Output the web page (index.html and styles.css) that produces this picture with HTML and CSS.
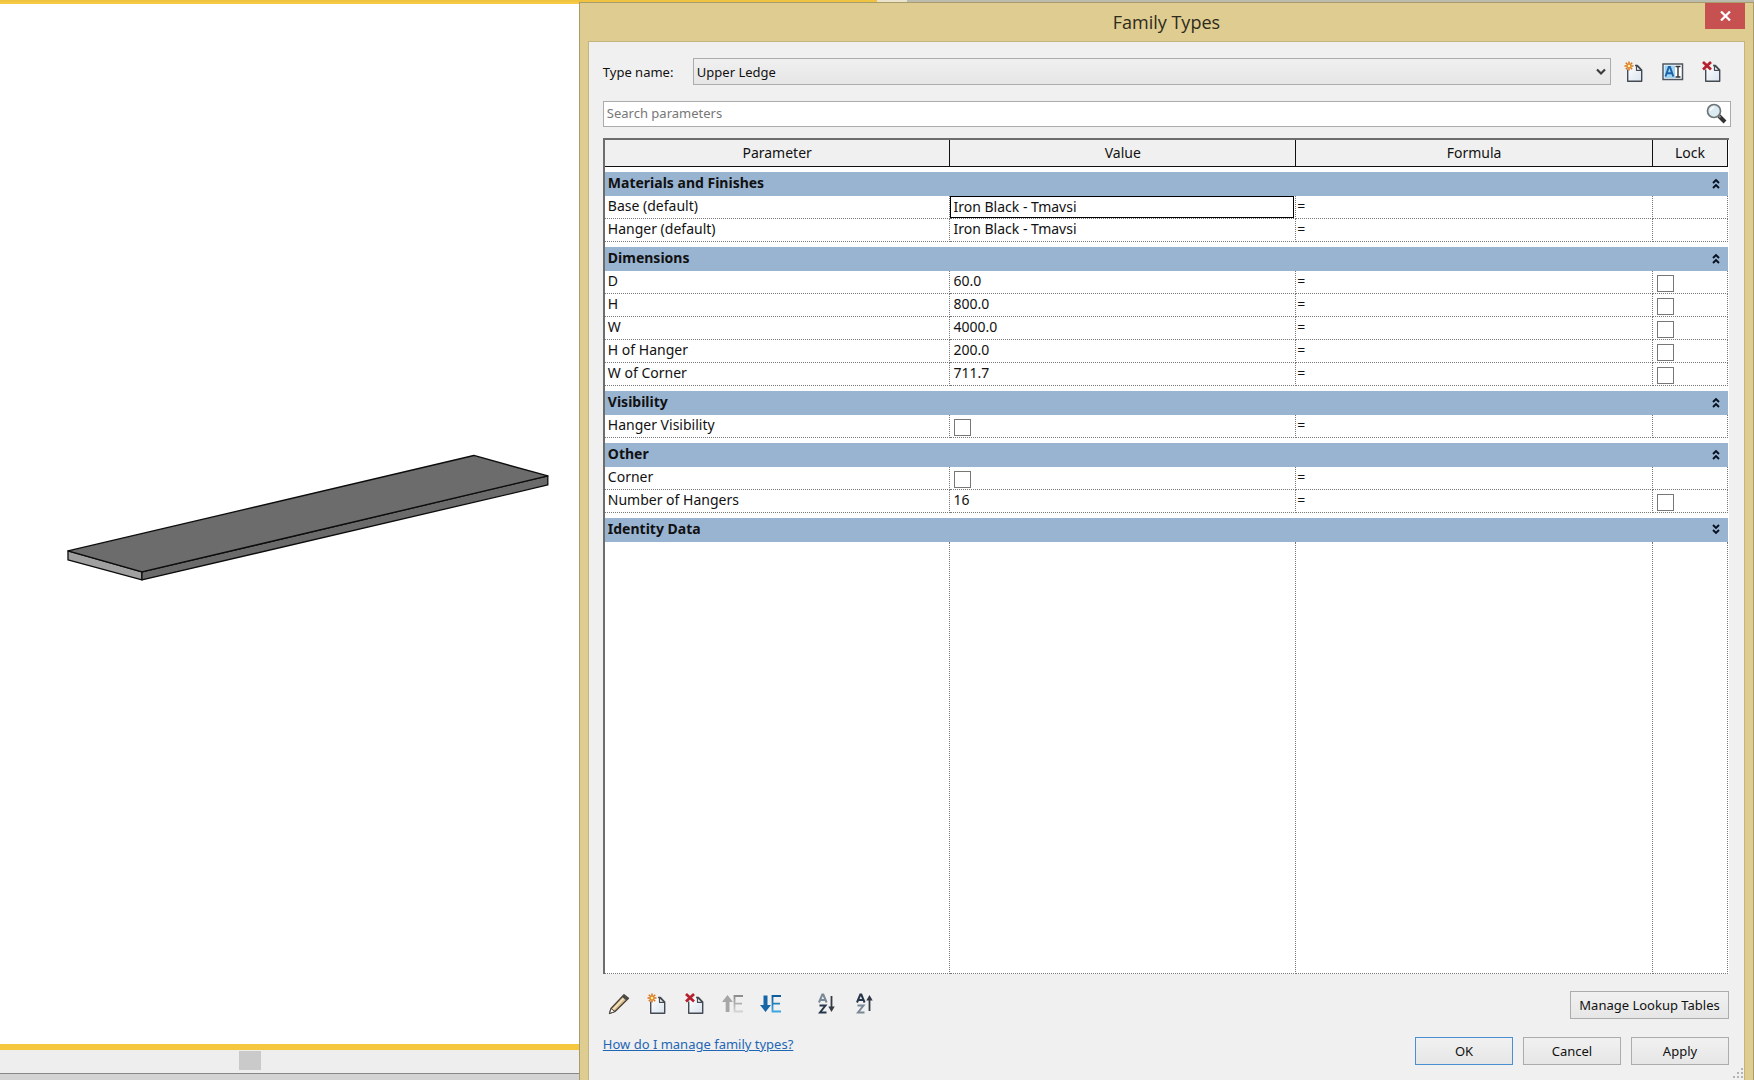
FILE: index.html
```html
<!DOCTYPE html>
<html lang="en">
<head>
<meta charset="utf-8">
<title>Family Types</title>
<link rel="stylesheet" href="styles.css">
</head>
<body>
<svg class="defs" aria-hidden="true">
  <defs>
    <linearGradient id="sheet" x1="0" y1="0" x2="1" y2="1"><stop offset="0" stop-color="#fff"/><stop offset="1" stop-color="#d9e3ef"/></linearGradient>
    <linearGradient id="fade" x1="0" y1="0" x2="0" y2="1"><stop offset="0" stop-color="#8d8d8d"/><stop offset="1" stop-color="#d4d4d4"/></linearGradient>
    <linearGradient id="blue" x1="0" y1="0" x2="0" y2="1"><stop offset="0" stop-color="#0d5c9c"/><stop offset="1" stop-color="#3ba7e0"/></linearGradient>
  </defs>
  <symbol id="page" viewBox="0 0 20 22">
    <path d="M3.700 8.500V20.300h14V9L13.500 4.500H11" fill="url(#sheet)" stroke="#454a52" stroke-width="1.400" stroke-linejoin="round"/>
    <path d="M12.500 4.500V9.300h5z" fill="#fff" stroke="#454a52" stroke-width="1.200" stroke-linejoin="round"/>
  </symbol>
  <symbol id="new" viewBox="0 0 20 22">
    <use href="#page"/>
    <path d="M5 .5v9M.5 5h9M1.800 1.800l6.400 6.400M8.200 1.800L1.800 8.200" stroke="#d9731a" stroke-width="1.500"/>
    <circle cx="5" cy="5" r="1.800" fill="#fff0a8" stroke="#e08a22" stroke-width=".8"/>
  </symbol>
  <symbol id="delete" viewBox="0 0 20 22">
    <use href="#page"/>
    <path d="M1 1l8 7.500M9 1L1 8.500" stroke="#b5202c" stroke-width="2.700"/>
  </symbol>
  <symbol id="up2" viewBox="0 0 8 11"><path d="M1 5L4 2l3 3M1 10l3-3 3 3" fill="none" stroke="#061020" stroke-width="1.900"/></symbol>
  <symbol id="down2" viewBox="0 0 8 11"><path d="M1 1l3 3 3-3M1 6l3 3 3-3" fill="none" stroke="#061020" stroke-width="1.900"/></symbol>
</svg>

<div class="app-edge"><span class="edge-gold"></span><span class="edge-light"></span><span class="edge-grey"></span></div>

<main class="workspace">
  <section class="viewport" aria-label="3D view">
    <div class="canvas">
      <svg class="shelf" viewBox="0 0 579 130" role="img" aria-label="Shelf model">
        <g stroke="#0c0c0c" stroke-width="1.300" stroke-linejoin="round">
          <path d="M68 100L142 121V129L68 109z" fill="#a0a0a0"/>
          <path d="M142 121L548 25V34L142 129z" fill="#6a6a6a"/>
          <path d="M68 100L474 4.500L548 25L142 121z" fill="#6c6c6c"/>
        </g>
      </svg>
    </div>
    <div class="scrollbar"><span class="thumb"></span></div>
    <div class="status"></div>
  </section>

  <section class="dialog" role="dialog" aria-labelledby="dialog-title">
    <header class="titlebar">
      <h1 id="dialog-title">Family Types</h1>
      <button class="close" aria-label="Close"><svg width="11" height="10" viewBox="0 0 11 10"><path d="M1 .5l9 9M10 .5l-9 9" stroke="#fff" stroke-width="2.200"/></svg></button>
    </header>

    <form class="panel">
      <div class="type-row">
        <label for="type-name">Type name:</label>
        <div class="select-box">
          <select id="type-name"><option>Upper Ledge</option></select>
          <svg class="arrow" width="10" height="8" viewBox="0 0 10 8"><path d="M1 1.500l4 4 4-4" fill="none" stroke="#3c3c3c" stroke-width="2.200"/></svg>
        </div>
        <button type="button" class="icon" aria-label="New type"><svg width="20" height="22"><use href="#new"/></svg></button>
        <button type="button" class="icon" aria-label="Rename type"><svg width="22" height="18" viewBox="0 0 22 18"><rect x="1" y="1" width="19.500" height="15.500" fill="#fff" stroke="#4b5560" stroke-width="1.500"/><path d="M2.500 2.500h10.500v12.500H2.500z" fill="#9fd2f3"/><path d="M3.500 13.500L6.800 4h1.200l3.300 9.500M4.800 10.300h5.500" fill="none" stroke="#1c63a5" stroke-width="1.900"/><path d="M13.500 3.500h5M13.500 14h5M16 3.500V14" stroke="#333" stroke-width="1.400"/></svg></button>
        <button type="button" class="icon" aria-label="Delete type"><svg width="20" height="22"><use href="#delete"/></svg></button>
      </div>

      <div class="search">
        <input type="text" placeholder="Search parameters" aria-label="Search parameters">
        <svg width="21" height="21" viewBox="0 0 21 21"><path d="M13 13l6 6" stroke="#333" stroke-width="4"/><path d="M12 12l2.500 2.500" stroke="#888" stroke-width="2"/><circle cx="8" cy="8" r="6.500" fill="#dcebf2" stroke="#6c7478" stroke-width="1.700"/><path d="M4.500 8A3.500 3.500 0 0 1 8 4.500" fill="none" stroke="#fff" stroke-width="1.500"/></svg>
      </div>

      <div class="grid">
        <table>
          <colgroup><col class="c-param"><col class="c-value"><col class="c-formula"><col class="c-lock"></colgroup>
          <thead><tr><th>Parameter</th><th>Value</th><th>Formula</th><th>Lock</th></tr></thead>
          <tbody>
            <tr class="gap"><td colspan="4"></td></tr>
            <tr class="group"><th colspan="4"><div>Materials and Finishes<button type="button" aria-label="Collapse"><svg width="8" height="11"><use href="#up2"/></svg></button></div></th></tr>
            <tr><td>Base (default)</td><td class="active"><input type="text" value="Iron Black - Tmavsi" aria-label="Base (default)"></td><td class="eq">=</td><td></td></tr>
            <tr><td>Hanger (default)</td><td>Iron Black - Tmavsi</td><td class="eq">=</td><td></td></tr>
            <tr class="gap"><td colspan="4"></td></tr>
            <tr class="group"><th colspan="4"><div>Dimensions<button type="button" aria-label="Collapse"><svg width="8" height="11"><use href="#up2"/></svg></button></div></th></tr>
            <tr><td>D</td><td>60.0</td><td class="eq">=</td><td class="tick"><input type="checkbox" aria-label="Lock D"></td></tr>
            <tr><td>H</td><td>800.0</td><td class="eq">=</td><td class="tick"><input type="checkbox" aria-label="Lock H"></td></tr>
            <tr><td>W</td><td>4000.0</td><td class="eq">=</td><td class="tick"><input type="checkbox" aria-label="Lock W"></td></tr>
            <tr><td>H of Hanger</td><td>200.0</td><td class="eq">=</td><td class="tick"><input type="checkbox" aria-label="Lock H of Hanger"></td></tr>
            <tr><td>W of Corner</td><td>711.7</td><td class="eq">=</td><td class="tick"><input type="checkbox" aria-label="Lock W of Corner"></td></tr>
            <tr class="gap"><td colspan="4"></td></tr>
            <tr class="group"><th colspan="4"><div>Visibility<button type="button" aria-label="Collapse"><svg width="8" height="11"><use href="#up2"/></svg></button></div></th></tr>
            <tr><td><label for="hanger-vis">Hanger Visibility</label></td><td class="tick"><input type="checkbox" id="hanger-vis"></td><td class="eq">=</td><td></td></tr>
            <tr class="gap"><td colspan="4"></td></tr>
            <tr class="group"><th colspan="4"><div>Other<button type="button" aria-label="Collapse"><svg width="8" height="11"><use href="#up2"/></svg></button></div></th></tr>
            <tr><td><label for="corner">Corner</label></td><td class="tick"><input type="checkbox" id="corner"></td><td class="eq">=</td><td></td></tr>
            <tr><td>Number of Hangers</td><td>16</td><td class="eq">=</td><td class="tick"><input type="checkbox" aria-label="Lock Number of Hangers"></td></tr>
            <tr class="gap"><td colspan="4"></td></tr>
            <tr class="group"><th colspan="4"><div>Identity Data<button type="button" aria-label="Expand"><svg width="8" height="11"><use href="#down2"/></svg></button></div></th></tr>
            <tr class="rest"><td></td><td></td><td></td><td></td></tr>
          </tbody>
        </table>
      </div>

      <div class="tools">
        <button type="button" class="icon" aria-label="Edit parameter"><svg width="22" height="22" viewBox="0 0 22 22"><path d="M1.500 20.500L3 15.500 16 1.800l4.500 3.400L7 18.500z" fill="#d8bd8c" stroke="#4a4238" stroke-width="1.300" stroke-linejoin="round"/><path d="M4.800 16.800L17.500 3.500" stroke="#f7e6c3" stroke-width="1.500"/><path d="M14 4l2-2.200 4.500 3.400-2 2.200z" fill="#4b4b4b"/><path d="M1.500 20.500L3 15.500l4 3z" fill="#fff" stroke="#4a4238"/></svg></button>
        <button type="button" class="icon" aria-label="New parameter"><svg width="20" height="22"><use href="#new"/></svg></button>
        <button type="button" class="icon" aria-label="Delete parameter"><svg width="20" height="22"><use href="#delete"/></svg></button>
        <button type="button" class="icon" aria-label="Move up" disabled><svg width="22" height="20" viewBox="0 0 22 20"><path d="M5.500 1L0 8h3.700v10h3.800V8H11z" fill="#a6a6a6"/><path d="M21 2h-8.500v15.500H21M12.500 9.700h7.500" fill="none" stroke="url(#fade)" stroke-width="1.800"/></svg></button>
        <button type="button" class="icon" aria-label="Move down"><svg width="22" height="20" viewBox="0 0 22 20"><path d="M5.500 18L0 11h3.500V1.500h4V11H11z" fill="#1767a8"/><path d="M21 2h-8.500v15.500H21M12.500 9.700h7.500" fill="none" stroke="url(#blue)" stroke-width="1.800"/></svg></button>
        <button type="button" class="icon sort" aria-label="Sort ascending"><svg width="18" height="22" viewBox="0 0 18 22"><path d="M1 9.500L4.300 1.500h1L8.600 9.500M2.300 7h5" fill="none" stroke="#7a8796" stroke-width="2"/><path d="M1.500 12.500h6L2 19.500h6.500" fill="none" stroke="#27364a" stroke-width="2"/><path d="M13.500 3v13" stroke="#333b46" stroke-width="1.800"/><path d="M10.300 13.500h6.400L13.500 19z" fill="#333b46"/></svg></button>
        <button type="button" class="icon" aria-label="Sort descending"><svg width="18" height="22" viewBox="0 0 18 22"><path d="M1 9.500L4.300 1.500h1L8.600 9.500M2.300 7h5" fill="none" stroke="#27364a" stroke-width="2"/><path d="M1.500 12.500h6L2 19.500h6.500" fill="none" stroke="#7a8796" stroke-width="2"/><path d="M13.500 5v13" stroke="#333b46" stroke-width="1.800"/><path d="M10.300 7.500h6.400L13.500 2z" fill="#333b46"/></svg></button>
        <button type="button" class="btn wide">Manage Lookup Tables</button>
      </div>

      <footer class="actions">
        <a href="#help">How do I manage family types?</a>
        <button type="submit" class="btn default">OK</button>
        <button type="button" class="btn">Cancel</button>
        <button type="button" class="btn">Apply</button>
      </footer>
      <svg class="grip" width="12" height="12" viewBox="0 0 12 12" aria-hidden="true"><path d="M9 0h2v2H9zM5 4h2v2H5zM9 4h2v2H9zM1 8h2v2H1zM5 8h2v2H5zM9 8h2v2H9z" fill="#b4b4b4"/></svg>
    </form>
  </section>
</main>
</body>
</html>
```
FILE: styles.css
```css
* { box-sizing: border-box; }

body {
  margin: 0;
  min-height: 100vh;
  display: flex;
  flex-direction: column;
  background: #fff;
  color: #111;
  font: 13px/20px "Noto Sans", "Open Sans", sans-serif;
}

button, input, select { font: inherit; color: inherit; }
button { padding: 0; border: 0; background: none; }
svg { display: block; }
.defs { position: absolute; width: 0; height: 0; }

/* Sliver of the host application above the dialog */
.app-edge { display: flex; height: 2px; }
.edge-gold { flex: 0 0 50%; background: #efc23f; }
.edge-light { flex: 0 0 30px; background: #ece3cc; }
.edge-grey { flex: 1; background: #bcbcae; }

.workspace { flex: 1; display: flex; }

/* 3D view */
.viewport { flex: 0 0 33%; display: flex; flex-direction: column; }
.canvas {
  flex: 1;
  display: flex;
  align-items: center;
  border-top: 2px solid #f6ca45;
  border-bottom: 6px solid #f5c73e;
}
.shelf { width: 100%; margin-bottom: 16px; }
.scrollbar { height: 24px; padding-top: 1px; background: #eee; border-bottom: 1px solid #888; }
.thumb { display: block; width: 22px; height: 19px; margin-left: 41.3%; background: #cacaca; }
.status { height: 6px; background: #d3d3d3; }

/* Dialog frame */
.dialog {
  flex: 1;
  display: flex;
  flex-direction: column;
  padding: 0 8px;
  background: #dfcc90;
  border: 1px solid #a89b6c;
  border-bottom: 0;
}
.titlebar { height: 38px; display: grid; grid-template-columns: 1fr auto 1fr; }
h1 { grid-column: 2; margin: 0; font: 18px/38px "Open Sans", sans-serif; color: #2e2a1c; }
.close {
  justify-self: end;
  width: 40px;
  height: 26px;
  display: grid;
  place-items: center;
  background: #c75050;
}

.panel {
  position: relative;
  flex: 1;
  display: flex;
  flex-direction: column;
  padding: 16px 13px 15px 14px;
  background: #f0f0f0;
  border: 1px solid #c3b37c;
  border-bottom: 0;
}

.type-row { display: flex; align-items: center; margin-bottom: 16px; }
.type-row label { flex: 0 0 90px; }
.select-box { position: relative; flex: 1; margin-right: 12px; }
.select-box select {
  appearance: none;
  display: block;
  width: 100%;
  height: 27px;
  padding: 0 3px;
  border: 1px solid #acacac;
  border-radius: 0;
  background: linear-gradient(#f0f0f0, #e6e6e6);
}
.arrow { position: absolute; right: 5px; top: 10px; pointer-events: none; }
.icon { width: 22px; height: 22px; display: grid; place-items: center; }
.type-row .icon + .icon { margin-left: 17px; }
.type-row .icon:last-child { margin-right: 8px; }

.search {
  display: flex;
  align-items: center;
  height: 26px;
  margin-bottom: 11px;
  padding: 0 3px 2px 0;
  background: #fff;
  border: 1px solid #ababab;
}
.search input { flex: 1; height: 22px; padding: 0 3px; border: 0; outline: 0; background: none; }
.search input::placeholder { color: #777; opacity: 1; }

/* Parameter table */
.grid {
  flex: 1;
  display: flex;
  margin-right: 2px;
  padding-right: 1px;
  background: #fff;
  border-top: 2px solid #6d6d6d;
  border-left: 2px solid #6d6d6d;
  font-size: 14px;
}
table { width: 100%; table-layout: fixed; border-spacing: 0; }
.c-param { width: 31%; }
.c-value { width: 31%; }
.c-formula { width: 32%; }
.c-lock { width: 75px; }
th, td { padding: 0; text-align: left; vertical-align: top; }
thead th {
  height: 27px;
  line-height: 25px;
  text-align: center;
  font-weight: 400;
  background: #f0f0f0;
  border-right: 1px solid #111;
  border-bottom: 1px solid #111;
}
tbody tr { height: 23px; }
tbody td {
  padding: 0 3px;
  line-height: 20px;
  border-right: 1px dotted #777;
  border-bottom: 1px dotted #777;
}
tbody .gap { height: 5px; }
.gap td { border: 0; line-height: 0; }
tbody .group { height: 24px; }
.group th { background: #99b4d1; }
.group div { display: flex; align-items: center; justify-content: space-between; height: 24px; padding: 0 8px 2px 3px; }
tbody .rest { height: auto; }
td.active { padding: 0 1px 0 0; }
.active input {
  display: block;
  width: 100%;
  height: 22px;
  padding: 0 2px 1px;
  border: 1px solid #000;
  outline: 0;
  background: #fff;
}
tbody .eq { padding: 0 1px; }
.tick input {
  appearance: none;
  display: block;
  width: 17px;
  height: 17px;
  margin: 4px 1px 1px;
  border: 1px solid #777;
  background: #fff;
}

/* Bottom bars */
.tools { display: flex; align-items: center; margin-top: 17px; padding: 0 2px 0 5px; gap: 16px; }
.tools .icon { margin-bottom: 2px; }
.tools .sort { margin-left: 18px; }
.btn {
  width: 98px;
  height: 28px;
  background: linear-gradient(#f1f1f1, #e6e6e6);
  border: 1px solid #acacac;
}
.btn.wide { width: 159px; margin-left: auto; }
.btn.default { border-color: #4a8fd0; }
.actions { display: flex; margin-top: 18px; padding-right: 2px; gap: 10px; }
.actions a { margin: -3px auto 0 0; line-height: 20px; color: #1f66b5; }
.grip { position: absolute; right: 0; bottom: 0; }
```
